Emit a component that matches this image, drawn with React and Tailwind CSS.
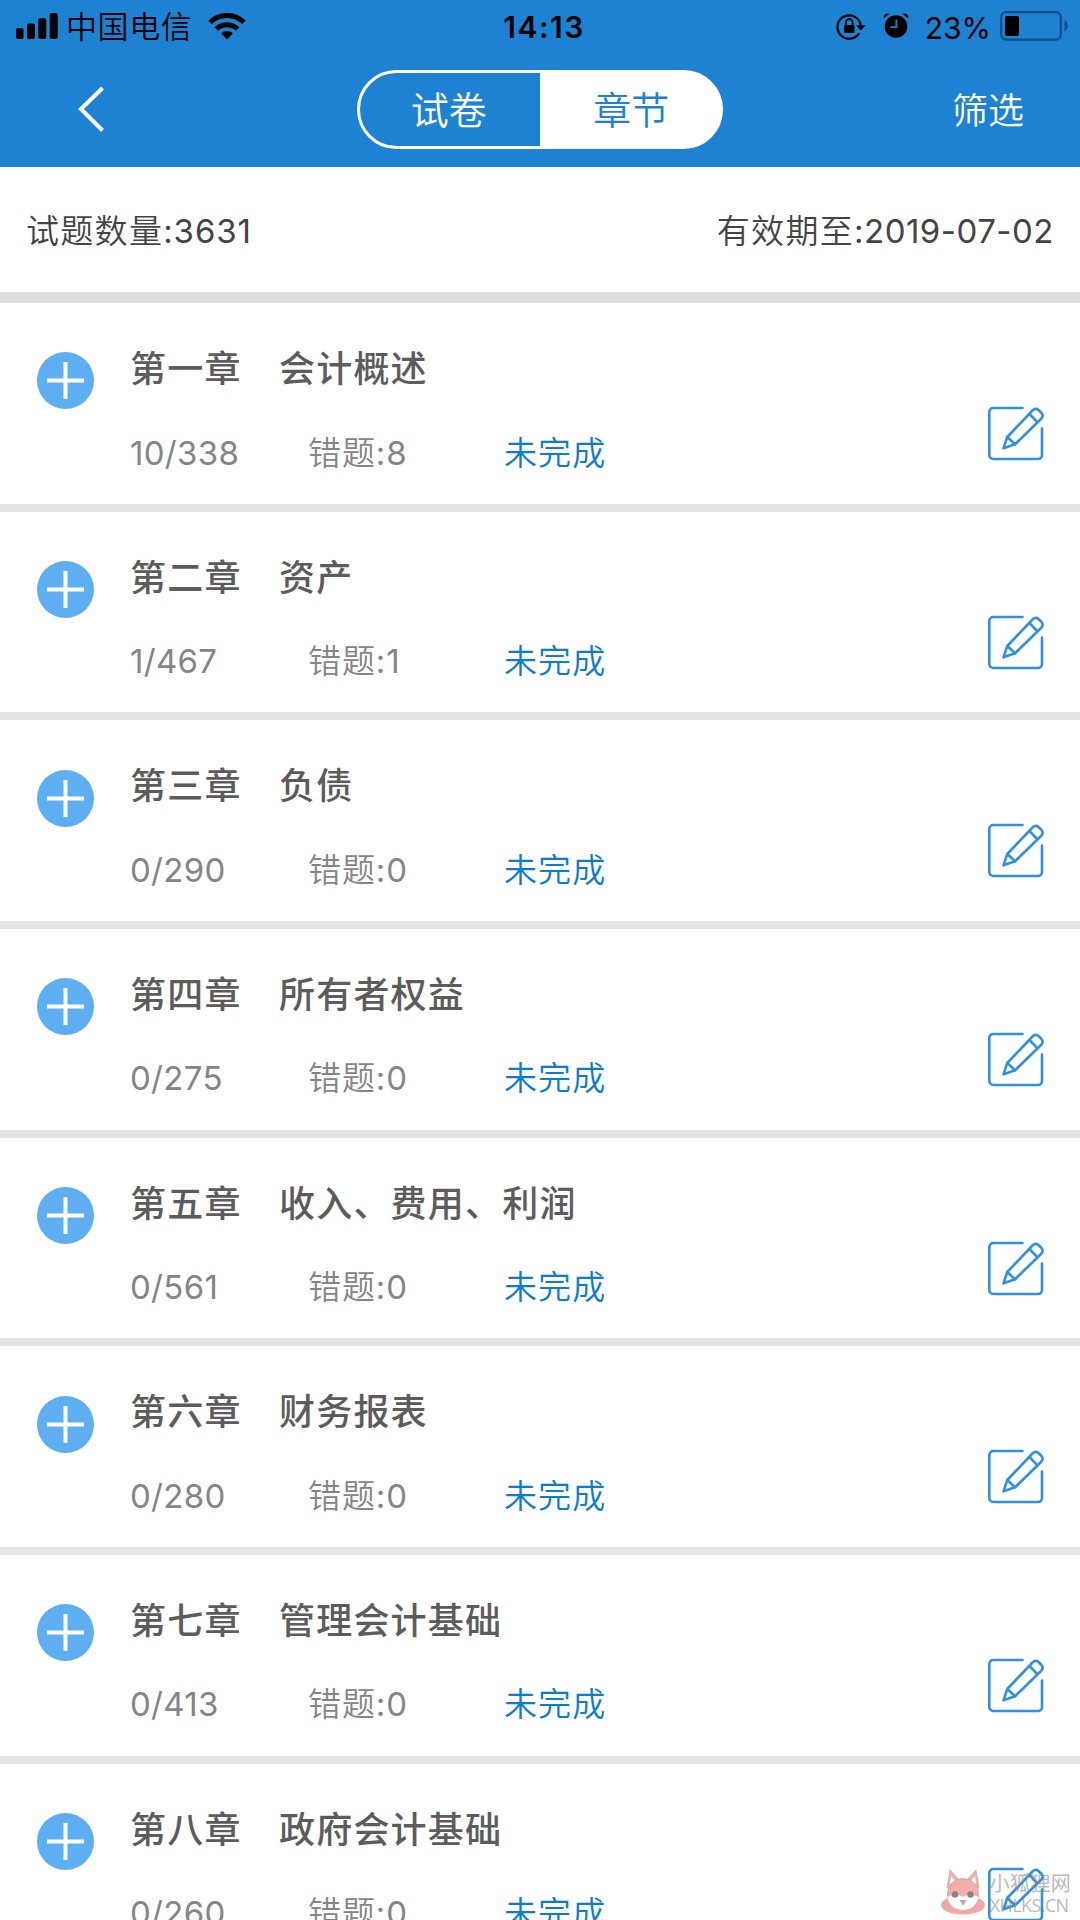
// Chapter list page of the question bank
import React from 'react';

const CHAPTERS = [
  { id: 1, name: '第一章', title: '会计概述', progress: '10/338', wrong: 8 },
  { id: 2, name: '第二章', title: '资产', progress: '1/467', wrong: 1 },
  { id: 3, name: '第三章', title: '负债', progress: '0/290', wrong: 0 },
  { id: 4, name: '第四章', title: '所有者权益', progress: '0/275', wrong: 0 },
  { id: 5, name: '第五章', title: '收入、费用、利润', progress: '0/561', wrong: 0 },
  { id: 6, name: '第六章', title: '财务报表', progress: '0/280', wrong: 0 },
  { id: 7, name: '第七章', title: '管理会计基础', progress: '0/413', wrong: 0 },
  { id: 8, name: '第八章', title: '政府会计基础', progress: '0/260', wrong: 0 },
];

const SignalIcon = () => (
  <svg className="w-[42px] h-[26px]" viewBox="0 0 42 26">
    <rect x="0" y="15" width="7.5" height="11" rx="2" />
    <rect x="11" y="10.5" width="8" height="15.5" rx="2" />
    <rect x="22.3" y="5.3" width="8" height="20.7" rx="2" />
    <rect x="33.7" y="0" width="8" height="26" rx="2" />
  </svg>
);

const WifiIcon = () => (
  <svg className="w-[38px] h-[27px]" viewBox="0 0 38 27" fill="none" stroke="#000" strokeWidth="5">
    <path d="M2 9.3C11.5 0.2 26.5 0.2 36 9.3" />
    <path d="M8.3 16C14.3 10.2 23.7 10.2 29.7 16" />
    <path d="M13.2 20.4C16.6 17.2 21.4 17.2 24.8 20.4L19 26.4Z" fill="#000" stroke="none" />
  </svg>
);

const RotationLockIcon = () => (
  <svg className="w-[30px] h-[27px]" viewBox="0 0 30 27" fill="none" stroke="#000" strokeWidth="2.2">
    <path d="M23.2 20.1A11.7 11.7 0 1 1 24.7 12" />
    <path d="M20 12.2H29.4L24.8 17.6Z" fill="#000" stroke="none" />
    <rect x="8" y="12" width="10.4" height="8" rx="1" fill="#000" stroke="none" />
    <path d="M9.8 12.5V9.6A3.4 3.6 0 0 1 16.6 9.6V12.5" strokeWidth="1.8" />
  </svg>
);

const AlarmIcon = () => (
  <svg className="w-[26px] h-[26px]" viewBox="0 0 26 26">
    <circle cx="13" cy="13.5" r="11.3" />
    <path d="M0.6 5.4C0.2 1.6 3.2-0.2 6.4 0.9ZM25.4 5.4C25.8 1.6 22.8-0.2 19.6 0.9Z" />
    <path d="M13.4 6.5V14.2H7.6" fill="none" stroke="#1e82d2" strokeWidth="1.8" />
  </svg>
);

const BatteryIcon = () => (
  <svg className="w-[69px] h-[30px]" viewBox="0 0 69 30">
    <rect x="1.2" y="1.2" width="59.6" height="27.4" rx="5" fill="none" stroke="#124f80" strokeWidth="2.2" />
    <rect x="5" y="5" width="14" height="20" rx="2" />
    <path d="M64.5 9.5C69 12 69 18 64.5 20.5Z" fill="#124f80" />
  </svg>
);

const EditIcon = () => (
  <svg
    className="w-[58px] h-[58px]"
    viewBox="0 0 58 58"
    fill="none"
    stroke="#3190e0"
    strokeWidth="2.6"
    strokeLinecap="round"
    strokeLinejoin="round"
  >
    <path d="M35.5 2H6.5A4 4 0 0 0 2.3 6V49A4 4 0 0 0 6.5 53H51A4 4 0 0 0 55 49V22.5" />
    <path d="M20.3 31L45.5 4.5Q48.5 1.5 51.5 4L54.5 7Q57 10 54 13L28 38.3L16.5 42.3Z" />
    <path d="M20.3 31L28 38.3M42.5 8L50 15.8" />
  </svg>
);

const StatusBar = () => (
  <div className="flex items-center h-[52px] pl-4 pr-[12px] text-black">
    <div className="flex flex-1 items-center">
      <SignalIcon />
      <span className="ml-[8px] text-[31px] tracking-[0.6px] leading-none font-[350] pt-[1px]">中国电信</span>
      <span className="ml-[16px]"><WifiIcon /></span>
    </div>
    <span className="ml-[4px] text-[30px] font-semibold tracking-[1.5px] leading-none pt-[2px]">14:13</span>
    <div className="flex flex-1 items-center justify-end">
      <RotationLockIcon />
      <span className="ml-[17px]"><AlarmIcon /></span>
      <span className="ml-[16px] text-[30px] leading-none pt-[3px]">23%</span>
      <span className="ml-[9px] -mr-[1px]"><BatteryIcon /></span>
    </div>
  </div>
);

const NavBar = () => (
  <div className="grid grid-cols-[1fr_366px_1fr] items-center h-[115px] pl-[56px] pr-[56px] text-white">
    <svg className="w-[28px] h-[46px] ml-[22px] -mt-[1px]" viewBox="0 0 28 46" fill="none" stroke="#fff" strokeWidth="4">
      <path d="M24.5 2L3 23L24.5 44.5" />
    </svg>
    <div className="flex h-[79px] -mt-[1px] border-[3px] border-white rounded-full overflow-hidden bg-linear-to-r from-transparent from-50% to-white to-50% bg-origin-border text-[38px]">
      <button className="flex-1 leading-none pt-[1px] pr-[5px] font-[350]">试卷</button>
      <button className="flex-1 leading-none pt-[1px] font-[350] text-[#1e82d2]">章节</button>
    </div>
    <button className="justify-self-end text-[36px] leading-none pt-[2px] font-[350]">筛选</button>
  </div>
);

const ChapterRow = ({ chapter }) => (
  <div className="flex h-[208.67px] shrink-0 border-b-8 border-[#e4e4e4] bg-white pl-[37px] pr-[35px]">
    <div className="flex items-center justify-center w-[57px] h-[57px] mt-[49.3px] rounded-full bg-[#5eaff1]">
      <svg className="w-[37px] h-[37px]" viewBox="0 0 37 37" stroke="#fff" strokeWidth="4">
        <path d="M0 18.5H37M18.5 0V37" />
      </svg>
    </div>
    <div className="flex-1 ml-[36px] pt-[46px]">
      <div className="flex text-[36px] leading-[40px] tracking-[1.2px] font-medium text-[#5c5c5c]">
        <span className="w-[149px]">{chapter.name}</span>
        <span>{chapter.title}</span>
      </div>
      <div className="flex mt-[43.5px] text-[33px] leading-[40px] font-[350] text-[#858585]">
        <span className="w-[178px] tracking-[0.3px] font-normal">{chapter.progress}</span>
        <span className="w-[196px] tracking-[0.9px]">错题<span className="font-normal">:{chapter.wrong}</span></span>
        <span className="tracking-[1.1px] text-[#0b7dcb]">未完成</span>
      </div>
    </div>
    <div className="mt-[103px]">
      <EditIcon />
    </div>
  </div>
);

const Watermark = () => (
  <div className="absolute right-[9px] bottom-[5px] flex items-end opacity-60">
    <svg className="w-[44px] h-[46px]" viewBox="0 0 44 46">
      <ellipse cx="22" cy="36" rx="22" ry="9.5" fill="#e9706d" />
      <path d="M6 19L9 1L20 13ZM38 19L35 1L24 13Z" fill="#ee7774" stroke="#777" strokeWidth="0.7" />
      <path d="M9 15L10 7L15 13ZM35 15L34 7L29 13Z" fill="#fff" />
      <ellipse cx="22" cy="25" rx="15.7" ry="15.5" fill="#ee7774" stroke="#777" strokeWidth="0.7" />
      <path d="M6.5 28C12 25 19 26 22 28C25 26 32 25 37.5 28C36 37 29 41 22 41C15 41 8 37 6.5 28Z" fill="#fff" />
      <circle cx="14" cy="25.5" r="3.2" fill="#333" />
      <circle cx="29.5" cy="25.5" r="3.2" fill="#333" />
      <path d="M18.5 31H25.5L22 37Z" fill="#777" />
    </svg>
    <div className="flex flex-col ml-[5px] text-[#8c8c8c]">
      <span className="text-[20px] leading-[22px] tracking-[0.3px]">小狐狸网</span>
      <span className="font-['Open_Sans'] text-[18px] leading-[20px] tracking-[-0.6px]">XHLKS.CN</span>
    </div>
  </div>
);

const App = () => (
  <div className="relative flex flex-col w-[1080px] h-[1920px] overflow-hidden bg-white font-['Inter','Noto_Sans_CJK_SC',sans-serif]">
    <header className="shrink-0 h-[167px] bg-[#1e82d2]">
      <StatusBar />
      <NavBar />
    </header>
    <div className="flex shrink-0 items-center justify-between h-[136px] pl-[26px] pr-[26px] pt-[4px] border-b-[11px] border-[#dedede] text-[33px] tracking-[1.3px] font-[350] text-[#444]">
      <span>试题数量<span className="font-normal tracking-[0.9px]">:3631</span></span>
      <span>有效期至<span className="font-normal tracking-[0.5px]">:2019-07-02</span></span>
    </div>
    {CHAPTERS.map((chapter) => (
      <ChapterRow key={chapter.id} chapter={chapter} />
    ))}
    <Watermark />
  </div>
);

export default App;
